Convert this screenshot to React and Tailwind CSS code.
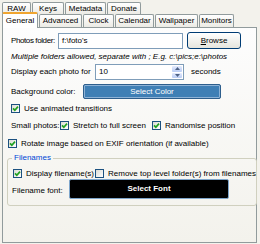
const Check = ({ checked }) => (
    <span className="w-[9px] h-[9px] border border-[#1c5180] bg-gradient-to-br from-[#dcdcd5] to-white flex items-center justify-center shrink-0">
        {checked && (
            <svg width="7" height="7" viewBox="0 0 7 7">
                <path d="M1 3.4 L2.8 5.2 L6 1.6" stroke="#21a121" strokeWidth="1.7" fill="none" />
            </svg>
        )}
    </span>
);

const Tab = ({ label, w, selected }) =>
    selected ? (
        <div
            className={`${w} h-[16px] -mt-[2px] -mb-px relative z-10 bg-white border border-[#919b9c] border-b-0 border-t-2 border-t-[#f0a530] rounded-t-[2px] flex items-center justify-center`}
        >
            {label}
        </div>
    ) : (
        <div
            className={`${w} h-full bg-gradient-to-b from-white to-[#ecebe5] border border-[#919b9c] border-b-0 rounded-t-[2px] flex items-center justify-center`}
        >
            {label}
        </div>
    );

export default function App() {
    return (
        <div className="w-[260px] h-[244px] bg-[#f3f2ec] overflow-hidden whitespace-nowrap text-[8px] leading-[10px] text-black font-['Liberation_Sans',Arial,sans-serif]">
            {/* back row of tabs */}
            <div className="flex gap-[1px] pl-[2px] pt-[2px] h-[14px]">
                <Tab label="RAW" w="w-[29px]" />
                <Tab label="Keys" w="w-[32px]" />
                <Tab label="Metadata" w="w-[41px]" />
                <Tab label="Donate" w="w-[34px]" />
            </div>
            {/* front row of tabs */}
            <div className="flex items-end gap-[1px] pl-[2px] h-[13px]">
                <Tab label="General" w="w-[36px]" selected />
                <Tab label="Advanced" w="w-[43px]" />
                <Tab label="Clock" w="w-[31px]" />
                <Tab label="Calendar" w="w-[39px]" />
                <Tab label="Wallpaper" w="w-[43px]" />
                <Tab label="Monitors" w="w-[35px]" />
            </div>

            {/* page */}
            <div className="ml-[2px] w-[255px] h-[216px] border border-[#919b9c] bg-gradient-to-b from-[#fdfdfd] to-[#f3f2ec] flex flex-col">
                <div className="mt-[4px] h-[17px] flex items-center pl-[8px]">
                    <span className="w-[47px] shrink-0 tracking-[-0.4px]">Photos folder:</span>
                    <div className="w-[125px] h-[16px] shrink-0 border border-[#7f9db9] bg-white flex items-center pl-[3px]">f:\foto's</div>
                    <button className="ml-[4px] w-[54px] h-[17px] shrink-0 rounded-[3px] border border-[#003c74] bg-gradient-to-b from-white to-[#e6e5dd] flex items-center justify-center">
                        <span><span className="underline">B</span>rowse</span>
                    </button>
                </div>

                <div className="mt-[3px] h-[10px] pl-[8px] italic flex items-center">
                    Multiple folders allowed, separate with ; E.g. c:\pics;e:\photos
                </div>

                <div className="mt-[2px] h-[16px] flex items-center pl-[8px]">
                    <span className="w-[84px] shrink-0">Display each photo for</span>
                    <div className="w-[89px] h-[16px] shrink-0 border border-[#7f9db9] bg-white flex items-center">
                        <span className="flex-1 pl-[3px]">10</span>
                        <div className="w-[11px] h-full py-[1px] pr-[1px] flex flex-col gap-[1px]">
                            <div className="flex-1 rounded-[1px] bg-gradient-to-b from-[#e4ebfd] to-[#b9cbf3] flex items-center justify-center">
                                <svg width="5" height="3" viewBox="0 0 5 3"><path d="M0 3 L2.5 0 L5 3 Z" fill="#4d6185" /></svg>
                            </div>
                            <div className="flex-1 rounded-[1px] bg-gradient-to-b from-[#e4ebfd] to-[#b9cbf3] flex items-center justify-center">
                                <svg width="5" height="3" viewBox="0 0 5 3"><path d="M0 0 L2.5 3 L5 0 Z" fill="#4d6185" /></svg>
                            </div>
                        </div>
                    </div>
                    <span className="ml-[7px]">seconds</span>
                </div>

                <div className="mt-[4px] h-[15px] flex items-center pl-[8px]">
                    <span className="w-[72px] shrink-0">Background color:</span>
                    <button className="w-[138px] h-[15px] shrink-0 rounded-[2px] border border-[#2d5e8c] ring-1 ring-inset ring-[#8db2d6] bg-[#3f7fb5] text-white flex items-center justify-center">
                        Select Color
                    </button>
                </div>

                <div className="mt-[4px] h-[11px] flex items-center pl-[8px] gap-[4px]">
                    <Check checked />
                    <span>Use animated transitions</span>
                </div>

                <div className="mt-[6px] h-[11px] flex items-center pl-[8px]">
                    <span className="w-[49px] shrink-0">Small photos:</span>
                    <Check checked />
                    <span className="ml-[4px] w-[79px] shrink-0">Stretch to full screen</span>
                    <Check checked />
                    <span className="ml-[4px]">Randomise position</span>
                </div>

                <div className="mt-[7px] h-[11px] flex items-center pl-[5px] gap-[4px]">
                    <Check checked />
                    <span>Rotate image based on EXIF orientation (if available)</span>
                </div>

                <fieldset className="mt-[4px] ml-[4px] w-[248px] border border-[#d0d0bf] rounded-[3px] pb-[6px]">
                    <legend className="ml-[4px] px-[2px] text-[#0046d5] leading-[10px]">Filenames</legend>
                    <div className="mt-[5px] h-[11px] flex items-center pl-[5px]">
                        <Check checked />
                        <span className="ml-[4px] w-[69px] shrink-0">Display filename(s)</span>
                        <Check />
                        <span className="ml-[4px]">Remove top level folder(s) from filenames</span>
                    </div>
                    <div className="h-[20px] flex items-center pl-[4px]">
                        <span className="w-[57px] shrink-0 pt-[4px]">Filename font:</span>
                        <button className="w-[160px] h-[20px] shrink-0 rounded-[2px] border border-[#7ea6cc] bg-black text-white font-bold flex items-center justify-center">
                            Select Font
                        </button>
                    </div>
                </fieldset>
            </div>
        </div>
    );
}
